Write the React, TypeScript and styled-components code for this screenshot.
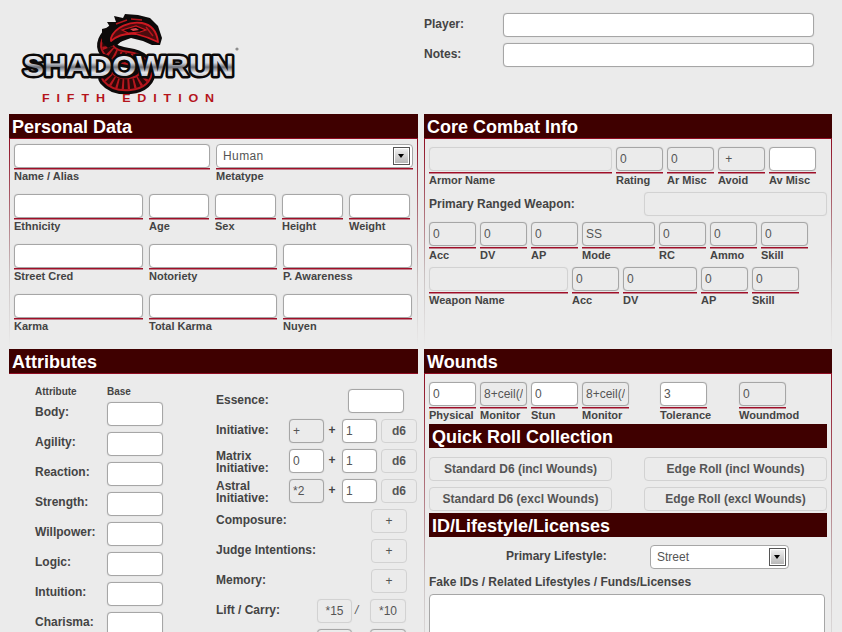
import React from 'react';
import styled, { createGlobalStyle } from 'styled-components';

type Tone = 'open' | 'calc' | 'faint';

const GlobalStyle = createGlobalStyle`
    html, body {
        margin: 0;
        height: 632px;
        overflow: hidden;
        background: #ebebeb;
        font-family: "Liberation Sans", Arial, sans-serif;
    }
`

const ATTRIBUTES = ['Body', 'Agility', 'Reaction', 'Strength', 'Willpower', 'Logic', 'Intuition', 'Charisma'];

const BODY_PATH = 'M116 33 C98 46 110 56 128 58 C150 61 152 82 130 84 C120 85 113 83 108 77';

const Logo = () => (
    <svg width="224" height="92" viewBox="18 14 224 92">
        <defs>
            <linearGradient id="chrome" x1="0" y1="0" x2="0" y2="1">
                <stop offset="0" stopColor="#ffffff" />
                <stop offset="0.42" stopColor="#d4d7de" />
                <stop offset="0.55" stopColor="#6d7079" />
                <stop offset="0.72" stopColor="#e6e8ec" />
                <stop offset="1" stopColor="#8b8e96" />
            </linearGradient>
        </defs>
        {/* serpent body */}
        <path d={BODY_PATH} fill="none" stroke="#0d0a0a" strokeWidth="20" strokeLinecap="round" />
        <path d={BODY_PATH} fill="none" stroke="#b5161d" strokeWidth="14" strokeLinecap="round" />
        <path d={BODY_PATH} fill="none" stroke="#2a0909" strokeWidth="10" strokeLinecap="round" />
        <path d={BODY_PATH} fill="none" stroke="#b5161d" strokeWidth="10" strokeDasharray="2 3.5" />
        {/* head and mane */}
        <path d="M102 29 L110 27 L107 22 L116 22 L114 16 L123 18 L125 14 L138 15 L150 18 L158 26 L162 38 L160 45 L152 45 L143 41 L131 38 L120 42 L108 48 L102 42 Z" fill="#0d0a0a" />
        <path d="M111 38 C115 27 130 21 142 23 C152 25 157 32 158 42 C152 39 144 36 136 34 C126 33 118 35 111 41 Z" fill="#4a0c0e" stroke="#cc1820" strokeWidth="1.8" strokeLinejoin="round" />
        <path d="M122 30 L136 26 L146 30 L140 32 L128 33 Z" fill="#120606" stroke="#cc1820" strokeWidth="1.2" />
        <path d="M130 29 L136 28 L139 30 L133 31 Z" fill="#d8454a" />
        <path d="M146 27 L153 36 M116 24 L127 20 M131 19 L142 20" stroke="#b3151c" strokeWidth="1.4" fill="none" />
        {/* word mark */}
        <text x="23" y="76" fontFamily="'Liberation Sans', Arial, sans-serif" fontWeight="700" fontSize="30" textLength="211" lengthAdjust="spacingAndGlyphs" fill="url(#chrome)" stroke="#0b0909" strokeWidth="5" strokeLinejoin="round" paintOrder="stroke">SHADOWRUN</text>
        <circle cx="237" cy="49" r="1.6" fill="#8d8d8d" />
        <text x="42" y="102" fontFamily="'Liberation Sans', Arial, sans-serif" fontWeight="700" fontSize="10" letterSpacing="5.5" textLength="179" lengthAdjust="spacingAndGlyphs" fill="#b5141b">FIFTH EDITION</text>
    </svg>
)

type FieldProps = {
    w: number;
    label: string;
    tone?: Tone;
    value?: string;
    drop?: boolean;
}

const Field = ({ w, label, tone = 'open', value = '', drop }: FieldProps) => (
    <FieldBox $w={w}>
        <Input $tone={tone} readOnly value={value} />
        <FieldLabel $drop={drop}>{label}</FieldLabel>
    </FieldBox>
)

const SelectControl = ({ w, value, wide }: { w: number; value: string; wide?: boolean }) => (
    <SelectWrap $w={w}>
        <Select $wide={wide} value={value} onChange={() => undefined}>
            <option>{value}</option>
        </Select>
        <SelectArrow />
    </SelectWrap>
)

const App: React.FunctionComponent = () => (
    <Page>
        <GlobalStyle />
        <Header>
            <LogoBox><Logo /></LogoBox>
            <PlayerForm>
                <PlayerRow>
                    <RowLabel $w={79}>Player:</RowLabel>
                    <Input $tone="open" $w={311} readOnly value="" />
                </PlayerRow>
                <PlayerRow>
                    <RowLabel $w={79}>Notes:</RowLabel>
                    <Input $tone="open" $w={311} readOnly value="" />
                </PlayerRow>
            </PlayerForm>
        </Header>

        <Sheet>
            <Section>
                <Title>Personal Data</Title>
                <Body>
                    <PersonalStack>
                        <Row>
                            <Field w={196} label="Name / Alias" />
                            <FieldBox $w={197}>
                                <SelectControl w={197} value="Human" wide />
                                <FieldLabel>Metatype</FieldLabel>
                            </FieldBox>
                        </Row>
                        <Row>
                            <Field w={129} label="Ethnicity" />
                            <Field w={60} label="Age" />
                            <Field w={61} label="Sex" />
                            <Field w={61} label="Height" />
                            <Field w={61} label="Weight" />
                        </Row>
                        <Row>
                            <Field w={129} label="Street Cred" />
                            <Field w={128} label="Notoriety" />
                            <Field w={129} label="P. Awareness" />
                        </Row>
                        <Row>
                            <Field w={129} label="Karma" />
                            <Field w={128} label="Total Karma" />
                            <Field w={129} label="Nuyen" />
                        </Row>
                    </PersonalStack>
                </Body>
            </Section>

            <Section>
                <Title>Core Combat Info</Title>
                <Body>
                    <CombatStack>
                        <TightRow>
                            <Field w={183} label="Armor Name" tone="faint" drop />
                            <Field w={47} label="Rating" tone="calc" value="0" drop />
                            <Field w={47} label="Ar Misc" tone="calc" value="0" drop />
                            <Field w={47} label="Avoid" tone="calc" value=" +" drop />
                            <Field w={47} label="Av Misc" drop />
                        </TightRow>
                        <SplitRow>
                            <RowLabel $lift={0}>Primary Ranged Weapon:</RowLabel>
                            <Input $tone="faint" $w={183} readOnly value="" />
                        </SplitRow>
                        <TightRow>
                            <Field w={47} label="Acc" tone="calc" value="0" drop />
                            <Field w={47} label="DV" tone="calc" value="0" drop />
                            <Field w={47} label="AP" tone="calc" value="0" drop />
                            <Field w={73} label="Mode" tone="calc" value="SS" drop />
                            <Field w={47} label="RC" tone="calc" value="0" drop />
                            <Field w={47} label="Ammo" tone="calc" value="0" drop />
                            <Field w={47} label="Skill" tone="calc" value="0" drop />
                        </TightRow>
                        <TightRow>
                            <Field w={139} label="Weapon Name" tone="faint" drop />
                            <Field w={47} label="Acc" tone="calc" value="0" drop />
                            <Field w={74} label="DV" tone="calc" value="0" drop />
                            <Field w={47} label="AP" tone="calc" value="0" drop />
                            <Field w={47} label="Skill" tone="calc" value="0" drop />
                        </TightRow>
                    </CombatStack>
                </Body>
            </Section>

            <Section>
                <Title>Attributes</Title>
                <AttributesBody>
                    <BaseColumn>
                        <BaseHead>
                            <HeadCell>Attribute</HeadCell>
                            <HeadCell>Base</HeadCell>
                        </BaseHead>
                        {ATTRIBUTES.map((name) => (
                            <BaseRow key={name}>
                                <RowLabel $w={72} $lift={2}>{name}:</RowLabel>
                                <Input $tone="open" $w={56} readOnly value="" />
                            </BaseRow>
                        ))}
                    </BaseColumn>
                    <DerivedColumn>
                        <DerivedRow>
                            <RowLabel $w={132} $lift={1.5}>Essence:</RowLabel>
                            <Input $tone="open" $w={56} readOnly value="" />
                        </DerivedRow>
                        <DerivedRow>
                            <RowLabel $w={73}>Initiative:</RowLabel>
                            <Input $tone="calc" $w={35} readOnly value="+" />
                            <Joiner>+</Joiner>
                            <Input $tone="open" $w={35} readOnly value="1" />
                            <DieButton>d6</DieButton>
                        </DerivedRow>
                        <DerivedRow>
                            <RowLabel $w={73} $lift={-1}>Matrix Initiative:</RowLabel>
                            <Input $tone="open" $w={35} readOnly value="0" />
                            <Joiner>+</Joiner>
                            <Input $tone="open" $w={35} readOnly value="1" />
                            <DieButton>d6</DieButton>
                        </DerivedRow>
                        <DerivedRow>
                            <RowLabel $w={73} $lift={-1}>Astral Initiative:</RowLabel>
                            <Input $tone="calc" $w={35} readOnly value="*2" />
                            <Joiner>+</Joiner>
                            <Input $tone="open" $w={35} readOnly value="1" />
                            <DieButton>d6</DieButton>
                        </DerivedRow>
                        <DerivedRow>
                            <RowLabel $w={155}>Composure:</RowLabel>
                            <PlusButton>+</PlusButton>
                        </DerivedRow>
                        <DerivedRow>
                            <RowLabel $w={155}>Judge Intentions:</RowLabel>
                            <PlusButton>+</PlusButton>
                        </DerivedRow>
                        <DerivedRow>
                            <RowLabel $w={155}>Memory:</RowLabel>
                            <PlusButton>+</PlusButton>
                        </DerivedRow>
                        <DerivedRow>
                            <RowLabel $w={101}>Lift / Carry:</RowLabel>
                            <Input $tone="faint" $w={35} $center readOnly value="*15" />
                            <Slash>/</Slash>
                            <Input $tone="faint" $w={36} $center readOnly value="*10" />
                        </DerivedRow>
                        <DerivedRow>
                            <RowLabel $w={101} />
                            <Input $tone="calc" $w={35} readOnly value="" />
                            <Slash />
                            <Input $tone="calc" $w={36} readOnly value="" />
                        </DerivedRow>
                    </DerivedColumn>
                </AttributesBody>
            </Section>

            <Section>
                <Title>Wounds</Title>
                <Body>
                    <WoundsBody>
                        <WoundRow>
                            <Field w={47} label="Physical" value="0" drop />
                            <Field w={47} label="Monitor" tone="calc" value="8+ceil(/" drop />
                            <Field w={47} label="Stun" value="0" drop />
                            <Field w={47} label="Monitor" tone="calc" value="8+ceil(/" drop />
                            <ToleranceSlot><Field w={47} label="Tolerance" value="3" drop /></ToleranceSlot>
                            <WoundmodSlot><Field w={47} label="Woundmod" tone="calc" value="0" drop /></WoundmodSlot>
                        </WoundRow>
                        <SubTitle>Quick Roll Collection</SubTitle>
                        <RollGrid>
                            <RollButton>Standard D6 (incl Wounds)</RollButton>
                            <RollButton>Edge Roll (incl Wounds)</RollButton>
                            <RollButton>Standard D6 (excl Wounds)</RollButton>
                            <RollButton>Edge Roll (excl Wounds)</RollButton>
                        </RollGrid>
                        <SubTitle>ID/Lifestyle/Licenses</SubTitle>
                        <LifestyleRow>
                            <LifestyleLabel>Primary Lifestyle:</LifestyleLabel>
                            <SelectControl w={139} value="Street" />
                        </LifestyleRow>
                        <NotesLabel>Fake IDs / Related Lifestyles / Funds/Licenses</NotesLabel>
                        <NotesArea readOnly value="" />
                    </WoundsBody>
                </Body>
            </Section>
        </Sheet>
    </Page>
)

const Page = styled.div`
    box-sizing: border-box;
    width: 842px;
    height: 632px;
    padding: 0 9px;
    overflow: hidden;
    color: #444;
    font-size: 12px;
`

const Header = styled.div`
    display: flex;
    height: 114px;
`

const LogoBox = styled.div`
    width: 415px;
    padding: 14px 0 0 9px;
    box-sizing: border-box;
    svg { display: block; }
`

const PlayerForm = styled.div`
    display: flex;
    flex-direction: column;
    gap: 6px;
    padding-top: 13px;
`

const PlayerRow = styled.div`
    display: flex;
    align-items: center;
`

// $lift nudges the text up (or down when negative) inside a centred row
const RowLabel = styled.div<{ $w?: number; $lift?: number }>`
    ${({ $w }) => $w ? `width: ${$w}px; flex: none;` : ''}
    padding-bottom: ${({ $lift = 1 }) => $lift > 0 ? $lift * 2 : 0}px;
    padding-top: ${({ $lift = 1 }) => $lift < 0 ? -$lift * 2 : 0}px;
    font-size: 12px;
    line-height: 12px;
    font-weight: 700;
    color: #444;
`

const Input = styled.input<{ $tone: Tone; $w?: number; $center?: boolean }>`
    box-sizing: border-box;
    display: block;
    flex: none;
    width: ${({ $w }) => $w ? `${$w}px` : '100%'};
    height: 24px;
    margin: 0;
    padding: 0 3px;
    border: 1px solid ${({ $tone }) => $tone === 'faint' ? '#d2d2d2' : '#a6a6a6'};
    border-radius: 4px;
    background: ${({ $tone }) => $tone === 'open' ? '#fff' : '#ebebeb'};
    box-shadow: 0 0 1px ${({ $tone }) => $tone === 'faint' ? '#ddd' : '#bbb'};
    outline: none;
    color: #555;
    font-family: "Liberation Sans", Arial, sans-serif;
    font-size: 12px;
    text-align: ${({ $center }) => $center ? 'center' : 'left'};
`

const FieldBox = styled.div<{ $w: number }>`
    flex: none;
    width: ${({ $w }) => $w}px;
`

const FieldLabel = styled.div<{ $drop?: boolean }>`
    margin-top: ${({ $drop }) => $drop ? 1 : 0}px;
    padding-top: 2px;
    background: linear-gradient(#a00f28 50%, #c27f8c 50%) top / 100% 2px no-repeat;
    font-size: 11px;
    line-height: 12px;
    font-weight: 700;
    color: #444;
    white-space: nowrap;
`

const SelectWrap = styled.div<{ $w: number }>`
    position: relative;
    flex: none;
    width: ${({ $w }) => $w}px;
    height: 24px;
`

const Select = styled.select<{ $wide?: boolean }>`
    appearance: none;
    box-sizing: border-box;
    display: block;
    width: 100%;
    height: 24px;
    margin: 0;
    padding: 0 0 0 6px;
    border: 1px solid #a6a6a6;
    border-radius: 4px;
    background: #fff;
    outline: none;
    color: #555;
    font-family: "Liberation Sans", Arial, sans-serif;
    font-size: 12px;
    letter-spacing: ${({ $wide }) => $wide ? '0.4px' : '0'};
`

const SelectArrow = styled.div`
    position: absolute;
    top: 3px;
    right: 3px;
    box-sizing: border-box;
    width: 17px;
    height: 18px;
    border: 1px solid #555;
    box-shadow: inset 0 0 0 1px #fff;
    background: linear-gradient(#f2f2f2, #b4b4b4);
    pointer-events: none;
    &::after {
        content: '';
        position: absolute;
        left: 4px;
        top: 6px;
        border-style: solid;
        border-width: 4px 3.5px 0;
        border-color: #000 transparent transparent;
    }
`

const Sheet = styled.div`
    display: grid;
    grid-template-columns: 409px 408px;
    grid-template-rows: 232px auto;
    column-gap: 6px;
    row-gap: 3px;
`

const Section = styled.section`
    display: flex;
    flex-direction: column;
`

const Title = styled.h2`
    flex: none;
    box-sizing: border-box;
    height: 25px;
    margin: 0;
    padding-left: 3px;
    background: #3f0000;
    border-bottom: 1px solid #8f0d22;
    color: #fff;
    font-size: 18px;
    line-height: 26px;
    font-weight: 700;
`

const Body = styled.div`
    flex: 1;
    box-sizing: border-box;
    border-style: solid;
    border-width: 0 1px;
    border-image: linear-gradient(#8f0d22, #c9c2c2 65%, #ebebeb) 1;
`

const PersonalStack = styled.div`
    display: flex;
    flex-direction: column;
    gap: 12px;
    padding: 5px 4px 0;
`

const Row = styled.div`
    display: flex;
    gap: 6px;
`

const CombatStack = styled.div`
    display: flex;
    flex-direction: column;
    gap: 6px;
    padding: 8px 4px 0;
`

const TightRow = styled.div`
    display: flex;
    gap: 4px;
`

const SplitRow = styled.div`
    display: flex;
    justify-content: space-between;
    align-items: center;
`

const AttributesBody = styled.div`
    display: flex;
`

const BaseColumn = styled.div`
    box-sizing: border-box;
    width: 207px;
    padding: 12px 0 0 26px;
`

const BaseHead = styled.div`
    display: flex;
    margin-bottom: 4px;
`

const HeadCell = styled.div`
    width: 72px;
    font-size: 10px;
    line-height: 12px;
    font-weight: 700;
    color: #444;
`

const BaseRow = styled.div`
    display: flex;
    align-items: center;
    margin-bottom: 6px;
`

const DerivedColumn = styled.div`
    display: flex;
    flex-direction: column;
    gap: 6px;
    padding-top: 15px;
`

const DerivedRow = styled.div`
    display: flex;
    align-items: center;
    height: 24px;
`

const Joiner = styled.div`
    flex: none;
    box-sizing: border-box;
    width: 18px;
    padding: 0 2px 3px 0;
    text-align: center;
    font-weight: 700;
    font-size: 12px;
    color: #444;
`

const Slash = styled.div`
    flex: none;
    box-sizing: border-box;
    width: 18px;
    padding: 0 0 3px 3px;
    font-size: 12px;
    font-style: italic;
    color: #555;
`

const GhostButton = styled.button`
    box-sizing: border-box;
    flex: none;
    height: 24px;
    margin: 0;
    padding: 0;
    border: 1px solid #d2d2d2;
    border-radius: 4px;
    background: #ebebeb;
    color: #555;
    font-family: "Liberation Sans", Arial, sans-serif;
    font-size: 12px;
    font-weight: 700;
`

const DieButton = styled(GhostButton)`
    width: 36px;
    margin-left: 4px;
`

const PlusButton = styled(GhostButton)`
    width: 36px;
    font-weight: 400;
`

const WoundsBody = styled.div`
    display: flex;
    flex-direction: column;
    padding: 8px 4px 0;
`

const WoundRow = styled.div`
    display: flex;
    gap: 4px;
    margin-bottom: 3px;
`

const ToleranceSlot = styled.div`
    margin-left: 27px;
`

const WoundmodSlot = styled.div`
    margin-left: 28px;
`

const SubTitle = styled.h3`
    flex: none;
    height: 24px;
    margin: 0;
    padding-left: 3px;
    background: #3f0000;
    color: #fff;
    font-size: 18px;
    line-height: 26px;
    font-weight: 700;
`

const RollGrid = styled.div`
    display: grid;
    grid-template-columns: 183px 183px;
    justify-content: space-between;
    row-gap: 6px;
    padding: 9px 0 2px;
`

const RollButton = styled(GhostButton)`
    width: 183px;
`

const LifestyleRow = styled.div`
    display: flex;
    align-items: center;
    margin-top: 8px;
    padding-left: 77px;
`

const LifestyleLabel = styled.div`
    width: 144px;
    padding-bottom: 2px;
    font-weight: 700;
    font-size: 12px;
    color: #444;
`

const NotesLabel = styled.div`
    margin-top: 7px;
    font-size: 12px;
    line-height: 12px;
    font-weight: 700;
    color: #444;
`

const NotesArea = styled.textarea`
    box-sizing: border-box;
    display: block;
    width: 396px;
    height: 90px;
    margin: 6px 0 0;
    padding: 4px;
    border: 1px solid #a6a6a6;
    border-radius: 4px;
    background: #fff;
    outline: none;
    resize: none;
`

export default App;
